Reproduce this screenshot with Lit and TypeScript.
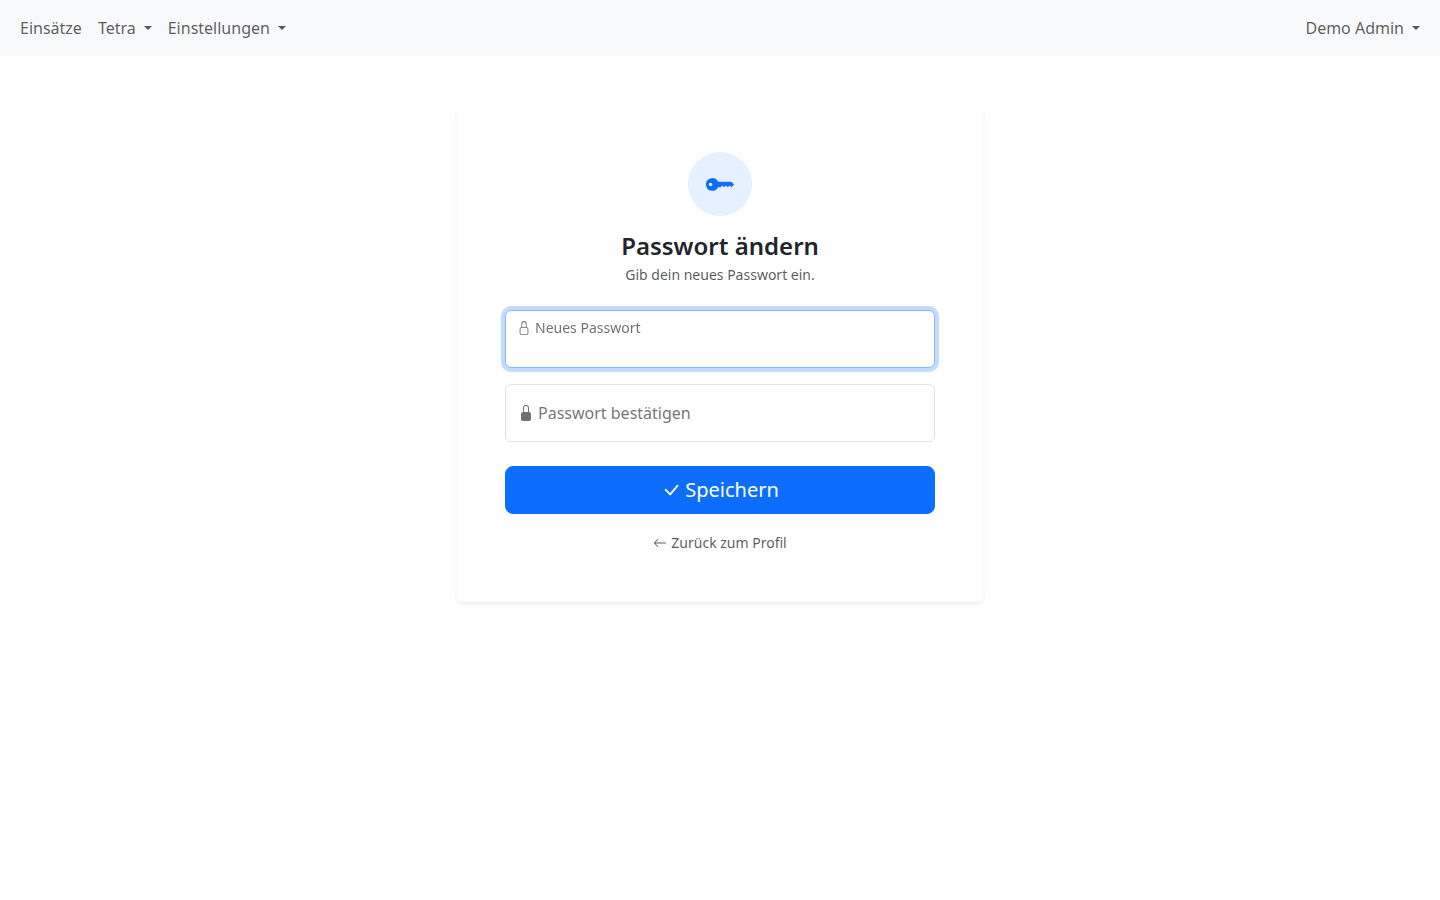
import { LitElement, html, css, svg } from "lit";
import { customElement, query } from "lit/decorators.js";

const paths = {
  key: "M3.5 11.5a3.5 3.5 0 1 1 3.163-5H14L15.5 8 14 9.5l-1-1-1 1-1-1-1 1-1-1-1 1H6.663a3.5 3.5 0 0 1-3.163 2M2.5 9a1 1 0 1 0 0-2 1 1 0 0 0 0 2",
  lock: "M8 1a2 2 0 0 1 2 2v4H6V3a2 2 0 0 1 2-2m3 6V3a3 3 0 0 0-6 0v4a2 2 0 0 0-2 2v5a2 2 0 0 0 2 2h6a2 2 0 0 0 2-2V9a2 2 0 0 0-2-2M5 8h6a1 1 0 0 1 1 1v5a1 1 0 0 1-1 1H5a1 1 0 0 1-1-1V9a1 1 0 0 1 1-1",
  lockFill: "M8 1a2 2 0 0 1 2 2v4H6V3a2 2 0 0 1 2-2m3 6V3a3 3 0 0 0-6 0v4a2 2 0 0 0-2 2v5a2 2 0 0 0 2 2h6a2 2 0 0 0 2-2V9a2 2 0 0 0-2-2",
  check: "M12.736 3.97a.733.733 0 0 1 1.047 0c.286.289.29.756.01 1.05L7.88 12.01a.733.733 0 0 1-1.065.02L3.217 8.384a.757.757 0 0 1 0-1.06.733.733 0 0 1 1.047 0l3.052 3.093 5.4-6.425z",
  arrowLeft: "M15 8a.5.5 0 0 0-.5-.5H2.707l3.147-3.146a.5.5 0 1 0-.708-.708l-4 4a.5.5 0 0 0 0 .708l4 4a.5.5 0 0 0 .708-.708L2.707 8.5H14.5A.5.5 0 0 0 15 8",
};

const icon = (name: keyof typeof paths) => html`
  <svg class="icon" viewBox="0 0 16 16" fill="currentColor" aria-hidden="true">
    ${svg`<path fill-rule="evenodd" d=${paths[name]}></path>`}
  </svg>`;

@customElement("app-root")
export class AppRoot extends LitElement {
  @query("#new-password") private newPassword!: HTMLInputElement;

  static styles = css`
    :host {
      display: block;
      min-height: 100vh;
      background: #fff;
      color: #212529;
      font: 16px/24px "Noto Sans", "Liberation Sans", sans-serif;
    }
    *, *::before, *::after { box-sizing: border-box; }
    .icon { display: block; flex: none; width: 1em; height: 1em; }
    .navbar {
      display: flex;
      justify-content: space-between;
      padding: 8px 12px;
      background: #f8f9fa;
    }
    .nav { display: flex; }
    .nav-link {
      display: flex;
      align-items: center;
      gap: 8px;
      padding: 8px;
      border: 0;
      background: none;
      color: rgba(0, 0, 0, 0.65);
      font: inherit;
      text-decoration: none;
      cursor: pointer;
    }
    .caret {
      border-top: 4px solid;
      border-left: 4px solid transparent;
      border-right: 4px solid transparent;
    }
    .page { padding: 48px 12px; }
    .card {
      max-width: 526px;
      margin: 0 auto;
      padding: 48px;
      border-radius: 6px;
      background: #fff;
      box-shadow: 0 2px 4px rgba(0, 0, 0, 0.075);
    }
    .head {
      display: flex;
      flex-direction: column;
      align-items: center;
      margin-bottom: 24px;
      text-align: center;
    }
    .badge {
      display: grid;
      place-items: center;
      width: 64px;
      height: 64px;
      margin-bottom: 16px;
      border-radius: 50%;
      background: rgba(13, 110, 253, 0.1);
      color: #0d6efd;
      font-size: 29px;
    }
    .title { margin: 0 0 4px; font-size: 24px; line-height: 28px; font-weight: 600; }
    .subtitle { margin: 0; color: rgba(33, 37, 41, 0.75); font-size: 14px; line-height: 22px; }
    .form { display: flex; flex-direction: column; }
    .field { position: relative; margin-bottom: 16px; }
    .field:last-of-type { margin-bottom: 24px; }
    .input {
      display: block;
      width: 100%;
      height: 58px;
      padding: 26px 12px 10px;
      border: 1px solid #dee2e6;
      border-radius: 6px;
      outline: 0;
      background: #fff;
      color: inherit;
      font: inherit;
    }
    .input:focus { border-color: #86b7fe; box-shadow: 0 0 0 4px rgba(13, 110, 253, 0.25); }
    .label {
      position: absolute;
      inset: 0;
      display: flex;
      align-items: center;
      gap: 4px;
      padding: 0 13px;
      color: rgba(33, 37, 41, 0.65);
      pointer-events: none;
    }
    .input:focus + .label,
    .input:not(:placeholder-shown) + .label {
      bottom: auto;
      padding: 8px 12px 0;
      font-size: 14px;
      line-height: 20px;
    }
    .submit {
      padding: 8px 16px;
      border: 1px solid #0d6efd;
      border-radius: 8px;
      background: #0d6efd;
      color: #fff;
      font: inherit;
      font-size: 20px;
      line-height: 30px;
      cursor: pointer;
    }
    .submit .icon { display: inline-block; margin-right: 4px; vertical-align: -0.125em; }
    .foot { display: flex; justify-content: center; margin-top: 18px; }
    .back {
      display: flex;
      align-items: center;
      gap: 4px;
      color: rgba(33, 37, 41, 0.75);
      font-size: 14px;
      line-height: 22px;
      text-decoration: none;
    }
  `;

  firstUpdated() {
    this.newPassword.focus();
  }

  render() {
    return html`
      <nav class="navbar">
        <div class="nav">
          <a class="nav-link" href="#">Einsätze</a>
          <button class="nav-link" type="button" aria-haspopup="true">Tetra<span class="caret"></span></button>
          <button class="nav-link" type="button" aria-haspopup="true">Einstellungen<span class="caret"></span></button>
        </div>
        <div class="nav">
          <button class="nav-link" type="button" aria-haspopup="true">Demo Admin<span class="caret"></span></button>
        </div>
      </nav>
      <main class="page">
        <section class="card">
          <header class="head">
            <div class="badge">${icon("key")}</div>
            <h1 class="title">Passwort ändern</h1>
            <p class="subtitle">Gib dein neues Passwort ein.</p>
          </header>
          <form class="form" @submit=${(e: Event) => e.preventDefault()}>
            <div class="field">
              <input class="input" id="new-password" type="password" placeholder=" " autocomplete="new-password" />
              <label class="label" for="new-password">${icon("lock")}Neues Passwort</label>
            </div>
            <div class="field">
              <input class="input" id="confirm-password" type="password" placeholder=" " autocomplete="new-password" />
              <label class="label" for="confirm-password">${icon("lockFill")}Passwort bestätigen</label>
            </div>
            <button class="submit" type="submit">${icon("check")}Speichern</button>
          </form>
          <div class="foot"><a class="back" href="#">${icon("arrowLeft")}Zurück zum Profil</a></div>
        </section>
      </main>
    `;
  }
}
